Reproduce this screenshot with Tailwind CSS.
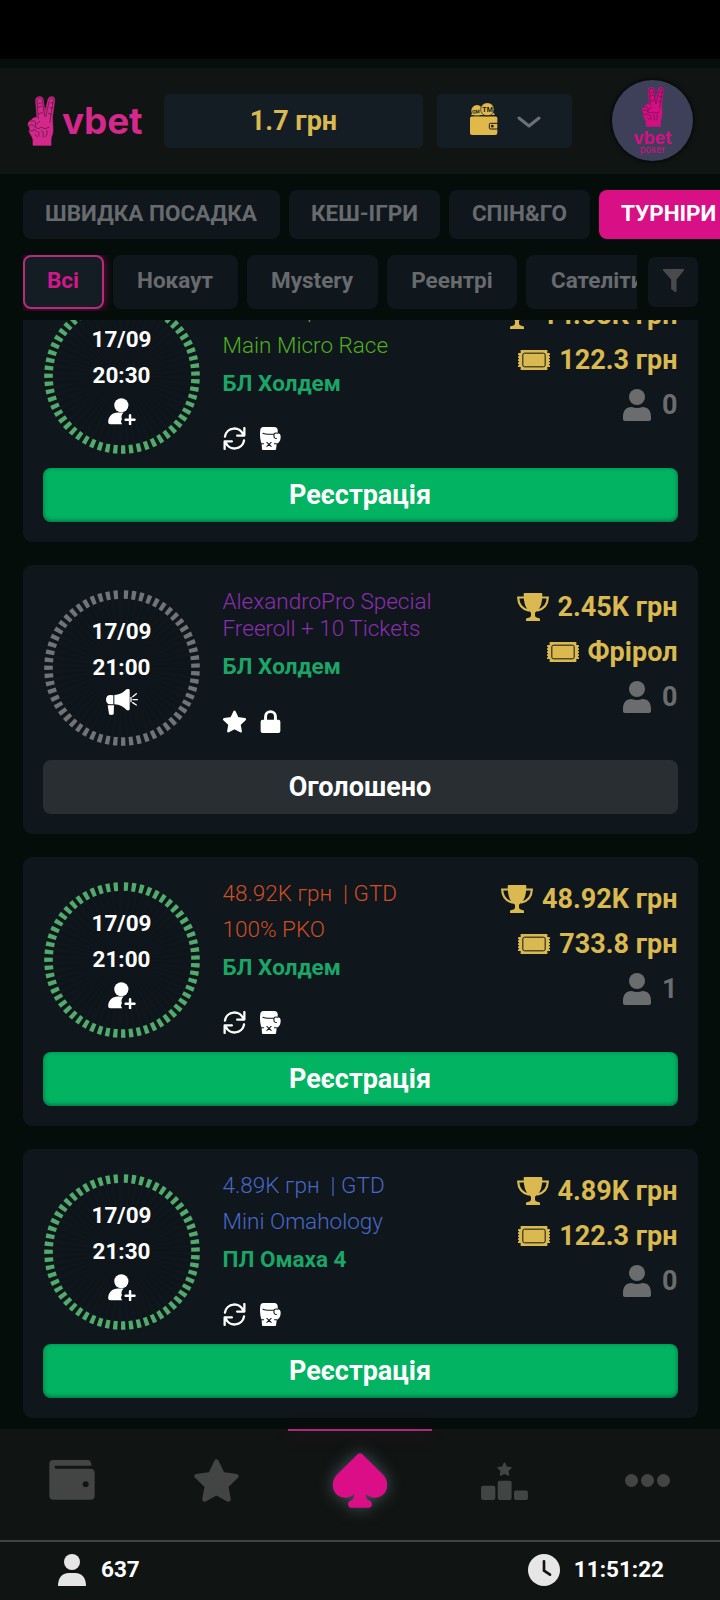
<!DOCTYPE html>
<html lang="uk">
<head>
<meta charset="utf-8">
<title>vbet poker</title>
<script src="https://cdn.jsdelivr.net/npm/@tailwindcss/browser@4"></script>
</head>
<body class="bg-[#050d0a] font-['Roboto',sans-serif] text-white">
<svg class="hidden">
  <symbol id="hand" viewBox="0 0 84 150">
    <g fill="currentColor" stroke="currentColor" stroke-width="2" stroke-linejoin="round">
      <path d="M26 14C26 5 31 2 38 2s11 4 11 12l5 34 9-37c1-6 5-9 12-9 6 0 9 5 8 11l-7 52 2 36c0 12-5 21-6 29v18H18v-18C14 116 6 111 6 104c4-3 3-8 0-12-5-7-3-15 7-19 4-7 8-9 17-8z"/>
    </g>
    <g fill="none" stroke="#101412" stroke-opacity=".75" stroke-width="2" stroke-linecap="round">
      <path d="M30 14c0-6 4-9 9-8s7 4 7 9l7 46M30 14l4 54M67 13c1-5 4-8 9-7 4 0 4 4 3 9l-9 52-1 12M66 17 56 62M12 77c6-5 12-3 14 4l-2 12M7 89c6-4 11-4 13 0M24 92c8 8 12 6 18 2l12 4 12-4M8 104c8 3 13 0 14-5l8 9M38 76l-8 8M36 108c-3 6-1 11 3 14M44 104c6 5 6 12 5 20M60 104c2 7-1 13-4 18M33 34l10-3M34 54l12-4M68 34l8 3M64 52l7 3M35 22l7-1M71 20l6 1M24 116l8 7"/>
    </g>
  </symbol>
  <symbol id="ring" viewBox="-78 -78 156 156">
    <path d="M.95 -37.5A37.5 37.5 0 1 1 -1.96 -37.45" fill="none" stroke="#000" stroke-opacity=".07" stroke-width="62" pathLength="355.55" stroke-dasharray="3.3 2.77"/>
    <path d="M1.86 -73.48A73.5 73.5 0 1 1 -3.85 -73.4" fill="none" stroke="currentColor" stroke-width="8.6" pathLength="355.55" stroke-dasharray="3.3 2.77"/>
  </symbol>
  <symbol id="useradd" viewBox="0 0 84 82">
    <circle cx="40" cy="22" r="21.5" fill="currentColor"/>
    <path d="M0 74c0-18 12-30 30-30h17c-7 7-8 15-5 20-4 6-4 10 1 16H7c-4 0-7-2-7-6z" fill="currentColor"/>
    <path d="M53 66h27M66.500 52.500v27" stroke="currentColor" stroke-width="7.500" stroke-linecap="round"/>
  </symbol>
  <symbol id="horn" viewBox="0 0 96 78">
    <path d="M22 19v27H12C5 46 0 40 0 32s5-14 13-14zM25 18c18-1 28-8 36-17 3-2 9-2 10 2v58c-1 4-7 4-10 1-8-8-19-15-36-16zM5 49h19l-1 26c0 3-12 4-14 0z" fill="currentColor"/>
    <path d="M80 23l11-9M81 32h13M80 41l11 7" stroke="currentColor" stroke-width="4" stroke-linecap="round"/>
    <path d="M75 24v16" stroke="currentColor" stroke-width="4"/>
  </symbol>
  <symbol id="sync" viewBox="0 0 70 70">
    <path d="M6 29A29 29 0 0 1 62 24M65 3v23H43M64 41A29 29 0 0 1 8 46M5 67V44H27" fill="none" stroke="currentColor" stroke-width="7" stroke-linecap="round" stroke-linejoin="round"/>
  </symbol>
  <symbol id="glove" viewBox="0 0 64 70">
    <path d="M10 0h34c6 0 10 4 10 10v9c6 0 9 4 9 10 0 14-6 20-12 22l-2 16c0 2-1 3-3 3H9c-2 0-3-1-3-3L5 51C0 39-1 22 1 8c1-5 4-8 9-8z" fill="currentColor"/>
    <path d="M9 19c8 4 17 3 33 3 3-4 8-4 12-3M43 23c-2 7 1 12 7 12M5 51h6M44 51h7M21 47l13 12M34 47 21 59" fill="none" stroke="#0f161c" stroke-width="3.200" stroke-linecap="round"/>
  </symbol>
  <symbol id="star" viewBox="0 0 134 130">
    <path d="M67 8 85 46 127 52 96 82 103 122 67 103 31 122 38 82 7 52 49 46Z" fill="currentColor" stroke="currentColor" stroke-width="14" stroke-linejoin="round"/>
  </symbol>
  <symbol id="lock" viewBox="0 0 60 70">
    <path d="M15 34V20a15 15 0 0 1 30 0v14" fill="none" stroke="currentColor" stroke-width="9"/>
    <rect y="30" width="60" height="40" rx="6" fill="currentColor"/>
  </symbol>
  <symbol id="cup" viewBox="0 0 96 84">
    <path d="M24 13.500H3.500C4 33 14 48 36 53M72 13.500h20.500C92 33 82 48 60 53" fill="none" stroke="currentColor" stroke-width="6.500"/>
    <path d="M20 4c0-3 1-4 4-4h48c3 0 4 1 4 4 0 28-6 45-22 55v8c0 4 3 7 9 8 5 0 6 2 6 5v4H27v-4c0-3 1-5 6-5 6-1 9-4 9-8v-8C26 49 20 32 20 4z" fill="currentColor"/>
  </symbol>
  <symbol id="ticket" viewBox="0 0 96 60">
    <path d="M8 3h80v6h5v42h-5v6H8v-6H3V9h5z" fill="currentColor"/>
    <path d="M2.500 10v43M93.500 10v43" stroke="currentColor" stroke-width="5" stroke-dasharray="5 4"/>
    <path d="M8 2h80" stroke="currentColor" stroke-width="4"/>
    <path d="M8 58h80" stroke="currentColor" stroke-width="4"/>
    <rect x="14.500" y="9.500" width="67" height="41" rx="5" fill="none" stroke="#0f161c" stroke-width="3"/>
  </symbol>
  <symbol id="person" viewBox="0 0 84 96">
    <circle cx="42" cy="24" r="24" fill="currentColor"/>
    <path d="M0 84C0 66 8 54 26 54c10 4 22 4 32 0 18 0 26 12 26 30v6c0 4-2 6-6 6H6c-4 0-6-2-6-6z" fill="currentColor"/>
  </symbol>
</svg>
<div class="flex h-[1600px] w-[720px] flex-col overflow-hidden">
  <div class="h-[59px] shrink-0 bg-black"></div>
  <div class="h-[9px] shrink-0 bg-[#060f0c]"></div>
  <header class="flex h-[106px] shrink-0 items-center bg-[#101412] pb-px pl-[27px]">
    <div class="flex h-[50px] w-[137px] shrink-0 items-center text-[#d4288c]">
      <svg class="h-[50px] w-[28px]"><use href="#hand"/></svg>
      <span class="ml-[7px] font-['Inter',sans-serif] text-[37px] leading-[40px] font-bold tracking-[-0.2px]">vbet</span>
    </div>
    <div class="flex h-[54px] w-[259px] items-center justify-center rounded-[5px] bg-[#151d24] pt-[2px] text-[27px] font-bold text-[#dab951]">1.7 грн</div>
    <div class="ml-[14px] flex h-[54px] w-[135px] items-center rounded-[5px] bg-[#151d24] pl-[33px]">
      <svg class="mb-[2px] h-[33px] w-[28px] text-[#e0b94a]" viewBox="0 0 84 99">
        <rect y="40" width="82" height="56" rx="6" fill="currentColor"/>
        <path d="M3 36c2-5 6-6 10-6h60v6z" fill="currentColor"/>
        <circle cx="21" cy="23" r="17" fill="currentColor"/>
        <circle cx="52" cy="19" r="20" fill="currentColor" stroke="#151d24" stroke-width="2"/>
        <path d="M0 38.500h82" stroke="#151d24" stroke-width="2.500"/>
        <text x="6" y="31" font-size="15" font-weight="700" fill="#151d24" font-family="Roboto" transform="rotate(-6 20 26)">GM</text>
        <text x="37" y="27" font-size="21" font-weight="700" fill="#151d24" font-family="Roboto">TM</text>
        <rect x="58" y="61" width="27" height="17" rx="3" fill="none" stroke="#151d24" stroke-width="3"/>
        <circle cx="67" cy="69.500" r="4" fill="#151d24"/>
      </svg>
      <svg class="ml-[19px] mt-[3px] h-[12px] w-[24px]" viewBox="0 0 24 12"><path d="M2 2l10 8 10-8" fill="none" stroke="#6b7177" stroke-width="3" stroke-linecap="round" stroke-linejoin="round"/></svg>
    </div>
    <div class="ml-[40px] flex size-[81px] flex-col items-center rounded-full bg-[#3d4058] pt-[7px] text-[#d30f84] shadow-[0_0_5px_#000]">
      <svg class="h-[40px] w-[23px]"><use href="#hand"/></svg>
      <span class="mt-[2px] font-['Inter',sans-serif] text-[17.5px] leading-[17px] font-bold">vbet</span>
      <span class="font-['Inter',sans-serif] text-[9.5px] leading-[7px]">poker</span>
    </div>
  </header>
  <nav class="flex h-[65px] shrink-0 gap-[9px] pt-[16px] pl-[23px] text-[22.5px] leading-[47px] font-bold whitespace-nowrap text-[#686b6d]">
    <div class="h-[49px] w-[257px] shrink-0 rounded-[8px] bg-[#0f161c] pr-px text-center">ШВИДКА ПОСАДКА</div>
    <div class="h-[49px] w-[151px] shrink-0 rounded-[8px] bg-[#0f161c] text-center">КЕШ-ІГРИ</div>
    <div class="h-[49px] w-[141px] shrink-0 rounded-[8px] bg-[#0f161c] text-center">СПІН&amp;ГО</div>
    <div class="h-[49px] w-[142px] shrink-0 rounded-[8px] bg-[#d80f85] pl-[22px] text-white">ТУРНІРИ</div>
  </nav>
  <div class="flex h-[81px] shrink-0 pt-[16px] pl-[23px] text-[22.5px] leading-[50px] font-bold whitespace-nowrap text-[#686b6d]">
    <div class="flex h-[56px] w-[614px] shrink-0 gap-[9px] overflow-hidden">
      <div class="h-[54px] w-[81px] shrink-0 rounded-[8px] border-2 border-[#b52c7b] bg-[#151d24] pr-px text-center leading-[46px] text-[#d0188a] shadow-[0_0_10px_#d80f8588]">Всі</div>
      <div class="h-[54px] w-[125px] shrink-0 rounded-[8px] bg-[#0f161c] pr-px text-center">Нокаут</div>
      <div class="h-[54px] w-[131px] shrink-0 rounded-[8px] bg-[#0f161c] pr-px text-center">Mystery</div>
      <div class="h-[54px] w-[130px] shrink-0 rounded-[8px] bg-[#0f161c] text-center">Реентрі</div>
      <div class="h-[54px] w-[145px] shrink-0 rounded-[8px] bg-[#0f161c] pl-[25px]">Сателіти</div>
    </div>
    <div class="mt-[2px] ml-[11px] flex size-[50px] items-center justify-center rounded-[7px] bg-[#0f161c]">
      <svg class="mb-[4px] h-[23px] w-[21px]" viewBox="0 0 62 68"><path d="M2 0h58c3 0 3 3 1 5L40 31v34c0 3-2 4-5 2L24 59V31L1 5C-1 3-1 0 2 0z" fill="#494a4b"/></svg>
    </div>
  </div>
  <main id="list" class="flex h-[1109px] shrink-0 flex-col justify-end gap-[23px] overflow-hidden px-[23px] pr-[22px] pb-[11px]"></main>
  <nav class="grid h-[111px] shrink-0 grid-cols-5 bg-[#101412] text-[#434544]">
    <div class="flex justify-center pt-[31px]">
      <svg class="h-[40px] w-[46px]" viewBox="0 0 136 120"><path d="M12 0h104c6 0 10 6 10 15v2H20c-6 0-6 9 0 9h104c8 0 12 5 12 12v69c0 8-4 12-12 12H12c-8 0-12-4-12-12V12C0 4 4 0 12 0z" fill="currentColor"/><circle cx="109" cy="73" r="9" fill="#101412"/></svg>
    </div>
    <div class="flex justify-center pt-[30px]"><svg class="h-[43px] w-[45px]"><use href="#star"/></svg></div>
    <div class="flex flex-col items-center">
      <div class="h-[2px] w-[144px] bg-[#a82c78] shadow-[0_3px_18px_#d80f8555]"></div>
      <svg class="mt-[22px] h-[55px] w-[54px] drop-shadow-[0_0_8px_#46545f]" viewBox="0 0 162 165"><path d="M74 4q7-7 14 0L152 67c16 18 13 48-3 59-16 12-36 10-50-2-2 11 3 17 12 20 8 3 8 19-2 20H53c-10-1-10-17-2-20 9-3 14-9 12-20-14 12-34 14-50 2-16-11-19-41-3-59z" fill="#db0e87"/></svg>
    </div>
    <div class="flex justify-center pt-[33px]">
      <svg class="h-[38px] w-[47px]" viewBox="0 0 138 112"><g fill="currentColor"><rect y="70" width="42" height="42" rx="6"/><rect x="49" y="55" width="41" height="57" rx="6"/><rect x="97" y="84" width="41" height="28" rx="6"/><path d="M69 3l6 12 13 2-9 9 2 13-12-6-12 6 2-13-9-9 13-2z" stroke="currentColor" stroke-width="4" stroke-linejoin="round"/></g></svg>
    </div>
    <div class="flex justify-center gap-[3px] pt-[45px] pr-px">
      <div class="size-[13px] rounded-full bg-[#434544]"></div><div class="size-[13px] rounded-full bg-[#434544]"></div><div class="size-[13px] rounded-full bg-[#434544]"></div>
    </div>
  </nav>
  <footer class="flex h-[60px] shrink-0 items-start justify-between border-t-2 border-[#3f4342] bg-[#101412] pt-[12px] pr-[56px] pl-[58px] text-[22.5px] leading-[31px] font-bold">
    <div class="flex gap-[15px]"><svg class="h-[32px] w-[28px]" viewBox="0 0 84 96"><g fill="#e6e6e6"><circle cx="42" cy="24" r="24"/><path d="M0 96C0 72 12 57 32 57h20c20 0 32 15 32 39z"/></g></svg><span>637</span></div>
    <div class="flex gap-[14px]"><svg class="size-[32px]" viewBox="0 0 96 96"><circle cx="48" cy="48" r="48" fill="#e6e6e6"/><path d="M48 22v28l18 12" fill="none" stroke="#101412" stroke-width="8" stroke-linecap="round" stroke-linejoin="round"/></svg><span>11:51:22</span></div>
  </footer>
</div>
<script>
const gtd = (color, prize, name) => `
  <div class="font-light whitespace-pre ${color}">${prize} грн  | GTD</div>
  <div class="mb-[2px] font-light ${color}">${name}</div>`;
const games = [
  {time: '20:30', open: true, title: gtd('text-[#4fae22]', '14.68K', 'Main Micro Race'), game: 'БЛ Холдем', prize: '14.68K грн', fee: '122.3 грн', players: 0},
  {time: '21:00', open: false, title: '<div class="mt-[5px] mb-[6px] leading-[27px] font-light text-[#8a2fae]">AlexandroPro Special<br>Freeroll + 10 Tickets</div>', game: 'БЛ Холдем', prize: '2.45K грн', fee: 'Фрірол', players: 0},
  {time: '21:00', open: true, title: gtd('text-[#d04e23]', '48.92K', '100% PKO'), game: 'БЛ Холдем', prize: '48.92K грн', fee: '733.8 грн', players: 1},
  {time: '21:30', open: true, title: gtd('text-[#4868c6]', '4.89K', 'Mini Omahology'), game: 'ПЛ Омаха 4', prize: '4.89K грн', fee: '122.3 грн', players: 0}
];
document.getElementById('list').innerHTML = games.map(g => `
  <section class="h-[269px] shrink-0 rounded-[9px] bg-[#0f161c] px-[20px]">
    <div class="flex h-[195px]">
      <div class="relative mt-[25px] mr-[20px] ml-px flex size-[156px] shrink-0 flex-col items-center pt-[23px] pr-px text-[22.5px] leading-[36px] font-bold">
        <svg class="absolute inset-0 size-full ${g.open ? 'text-[#52aa6b]' : 'text-[#707477]'}"><use href="#ring"/></svg>
        <div class="relative">17/09</div><div class="relative">${g.time}</div>
        ${g.open ? '<svg class="relative mt-[5px] h-[27px] w-[28px]"><use href="#useradd"/></svg>' : '<svg class="relative mt-[4px] h-[26px] w-[32px]"><use href="#horn"/></svg>'}
      </div>
      <div class="grow pt-[18px] pl-[2.5px] text-[22.5px] leading-[36px]">
        ${g.title}
        <div class="font-bold text-[#1ba566]">${g.game}</div>
        <div class="mt-[26px] flex gap-[14px]">
          <svg class="size-[23px]"><use href="${g.open ? '#sync' : '#star'}"/></svg>
          <svg class="h-[23px] w-[21px]"><use href="${g.open ? '#glove' : '#lock'}"/></svg>
        </div>
      </div>
      <div class="flex flex-col items-end pt-[19px] pr-[.5px] text-[27px] leading-[47px] font-bold text-[#dab951]">
        <div class="flex h-[45px] items-center gap-[9px]"><svg class="h-[28px] w-[32px]"><use href="#cup"/></svg><span class="mt-[2px]">${g.prize}</span></div>
        <div class="flex h-[45px] items-center gap-[9px]"><svg class="h-[20px] w-[32px]"><use href="#ticket"/></svg><span class="mt-[2px]">${g.fee}</span></div>
        <div class="flex h-[45px] items-center gap-[11px] text-[#6b6c6e]"><svg class="h-[32px] w-[28px]"><use href="#person"/></svg><span class="mt-[2px]">${g.players}</span></div>
      </div>
    </div>
    ${g.open
      ? '<div class="h-[54px] rounded-[8px] bg-[#02b362] pr-px text-center text-[27px] leading-[55px] font-bold shadow-[inset_0_-1px_4px_#00693c]">Реєстрація</div>'
      : '<div class="h-[54px] rounded-[8px] bg-[#282e31] pr-px text-center text-[27px] leading-[55px] font-bold">Оголошено</div>'}
  </section>`).join('');
</script>
</body>
</html>
